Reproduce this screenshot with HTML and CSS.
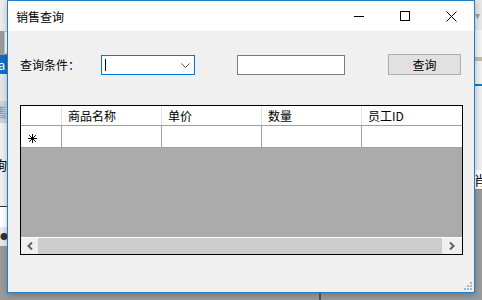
FILE: index.html
```html
<!DOCTYPE html>
<html lang="zh-CN">
  <head>
    <meta charset="UTF-8" />
    <title>销售查询</title>
    <link rel="stylesheet" href="styles.css">
  </head>
  <body>
    <div class="desktop">
      <!-- windows behind -->
      <div class="behind behind-left">
        <div class="bl-top"></div>
        <div class="bl-field"></div>
        <div class="bl-blue">a</div>
        <div class="bl-light"></div>
        <div class="bl-tab">售</div>
        <div class="bl-panel">询</div>
        <div class="bl-white"></div>
        <div class="bl-dot">●</div>
      </div>
      <div class="behind behind-right">
        <div class="br-top">▾</div>
        <div class="br-light"></div>
        <div class="br-tan"></div>
        <div class="br-light2"></div>
        <div class="br-blue"></div>
        <div class="br-panel"></div>
        <div class="br-text">肖</div>
      </div>
      <div class="behind-line"></div>

      <!-- Main window -->
      <div class="window">
        <div class="titlebar">
          <span class="title">销售查询</span>
          <div class="caption-buttons">
            <span class="cap-btn">
              <svg width="10" height="10" viewBox="0 0 10 10"><path d="M0 5.5H10" stroke="#000" stroke-width="1"/></svg>
            </span>
            <span class="cap-btn">
              <svg width="10" height="10" viewBox="0 0 10 10"><rect x="0.5" y="0.5" width="9" height="9" fill="none" stroke="#000" stroke-width="1"/></svg>
            </span>
            <span class="cap-btn">
              <svg width="11" height="11" viewBox="0 0 11 11"><path d="M0.5 0.5L10.5 10.5M10.5 0.5L0.5 10.5" stroke="#000" stroke-width="1"/></svg>
            </span>
          </div>
        </div>

        <div class="client">
          <div class="query-row">
            <label class="query-label">查询条件：</label>
            <div class="combo">
              <span class="caret"></span>
              <svg class="combo-arrow" width="9" height="5" viewBox="0 0 9 5"><path d="M0.5 0.5L4.5 4.5L8.5 0.5" fill="none" stroke="#555" stroke-width="1"/></svg>
            </div>
            <input class="textbox" type="text" />
            <button class="btn">查询</button>
          </div>

          <div class="grid">
            <div class="grid-head">
              <div class="cell rh"></div>
              <div class="cell col">商品名称</div>
              <div class="cell col">单价</div>
              <div class="cell col">数量</div>
              <div class="cell col last">员工ID</div>
            </div>
            <div class="grid-row">
              <div class="cell rh">
                <svg width="9" height="9" viewBox="0 0 9 9"><path d="M4.5 0V9M0 4.5H9M1.2 1.2L7.8 7.8M7.8 1.2L1.2 7.8" stroke="#000" stroke-width="1"/></svg>
              </div>
              <div class="cell col"></div>
              <div class="cell col"></div>
              <div class="cell col"></div>
              <div class="cell col last"></div>
            </div>
            <div class="grid-empty"></div>
            <div class="hscroll">
              <span class="arrow arrow-left">
                <svg width="6" height="8" viewBox="0 0 6 8"><path d="M5 0.5L1.5 4L5 7.5" fill="none" stroke="#606060" stroke-width="2"/></svg>
              </span>
              <span class="thumb"></span>
              <span class="arrow arrow-right">
                <svg width="6" height="8" viewBox="0 0 6 8"><path d="M1 0.5L4.5 4L1 7.5" fill="none" stroke="#606060" stroke-width="2"/></svg>
              </span>
            </div>
          </div>

          <svg class="grip" width="9" height="9" viewBox="0 0 9 9">
            <rect x="6" y="0" width="2" height="2" fill="#b5b5b5"/>
            <rect x="3" y="3" width="2" height="2" fill="#b5b5b5"/>
            <rect x="6" y="3" width="2" height="2" fill="#b5b5b5"/>
            <rect x="0" y="6" width="2" height="2" fill="#b5b5b5"/>
            <rect x="3" y="6" width="2" height="2" fill="#b5b5b5"/>
            <rect x="6" y="6" width="2" height="2" fill="#b5b5b5"/>
          </svg>
        </div>
      </div>
    </div>
  </body>
</html>
```

FILE: styles.css
```css
/* Desktop */
body {
  margin: 0;
  font-family: "Noto Sans CJK SC", "Liberation Sans", sans-serif;
  font-size: 12px;
}
.desktop {
  position: relative;
  width: 482px;
  height: 300px;
  overflow: hidden;
  background: #9a9a9a;
}

/* Windows behind the dialog */
.behind {
  position: absolute;
  top: 0;
  width: 8px;
  overflow: hidden;
  font-size: 13px;
  line-height: 1;
}
.behind-left {
  left: 0;
}
.behind-right {
  right: 0;
  width: 8px;
}
.bl-top {
  height: 31px;
  background: #ececec;
}
.bl-field {
  height: 21px;
  margin-left: 4px;
  background: #fff;
  border: 1px solid #ccc;
  border-right: 0;
}
.bl-blue {
  height: 19px;
  margin-top: 1px;
  background: #0e6fc4;
  color: #fff;
  line-height: 19px;
  text-indent: -2px;
}
.bl-light {
  height: 27px;
  background: #e6e6e6;
}
.bl-tab {
  height: 22px;
  background: #cad3df;
  color: #8a94a3;
  line-height: 22px;
  text-indent: -6px;
}
.bl-panel {
  height: 83px;
  background: #f0f0f0;
  border-bottom: 1px solid #333;
  line-height: 84px;
  text-indent: -6px;
}
.bl-white {
  height: 20px;
  background: #fff;
}
.bl-dot {
  height: 19px;
  background: #e8e8e8;
  color: #333;
  font-size: 8px;
  line-height: 20px;
}
.br-top {
  height: 30px;
  background: #e6e6e6;
  color: #999;
  line-height: 30px;
  font-size: 10px;
  text-indent: 1px;
}
.br-light {
  height: 27px;
  background: #f3f3f3;
}
.br-tan {
  height: 4px;
  background: #c6b8a4;
}
.br-light2 {
  height: 23px;
  background: #f0f0f0;
}
.br-blue {
  height: 2px;
  background: #1079c8;
}
.br-panel {
  height: 84px;
  background: #ededed;
}
.br-text {
  height: 19px;
  background: #fff;
  line-height: 19px;
  border-bottom: 1px solid #888;
}
.behind-line {
  position: absolute;
  left: 319px;
  top: 290px;
  width: 2px;
  height: 10px;
  background: #555;
}

/* Main window */
.window {
  position: relative;
  margin-left: 7px;
  width: 466px;
  height: 291px;
  border: 1px solid #1a7fcf;
  background: #f0f0f0;
  display: flex;
  flex-direction: column;
  box-shadow: 0 2px 6px rgba(0, 0, 0, 0.25);
}
.titlebar {
  height: 30px;
  background: #fff;
  display: flex;
  align-items: center;
}
.title {
  padding-left: 8px;
  color: #000;
}
.caption-buttons {
  margin-left: auto;
  display: flex;
}
.cap-btn {
  width: 46px;
  height: 30px;
  display: flex;
  align-items: center;
  justify-content: center;
}

.client {
  flex: 1;
  position: relative;
  padding: 23px 0 0 12px;
}
.query-row {
  display: flex;
  align-items: flex-start;
  height: 21px;
}
.query-label {
  width: 81px;
  line-height: 21px;
  color: #000;
}
.combo {
  box-sizing: border-box;
  width: 94px;
  height: 20px;
  margin-top: 1px;
  border: 1px solid #0078d7;
  background: #fff;
  display: flex;
  align-items: center;
  padding-left: 3px;
}
.caret {
  width: 1px;
  height: 12px;
  background: #000;
}
.combo-arrow {
  margin-left: auto;
  margin-right: 4px;
  margin-top: 1px;
}
.textbox {
  box-sizing: border-box;
  width: 108px;
  height: 20px;
  margin: 1px 0 0 42px;
  padding: 0;
  border: 1px solid #7a7a7a;
  background: #fff;
}
.btn {
  box-sizing: border-box;
  width: 73px;
  height: 21px;
  margin-left: 43px;
  padding: 0;
  border: 1px solid #adadad;
  background: #e1e1e1;
  font: inherit;
  color: #000;
}

/* Data grid */
.grid {
  box-sizing: border-box;
  width: 443px;
  height: 150px;
  margin-top: 30px;
  border: 1px solid #000;
  background: #ababab;
  display: flex;
  flex-direction: column;
}
.grid-head,
.grid-row {
  display: flex;
  background: #fff;
  border-bottom: 1px solid #a0a0a0;
}
.grid-head {
  height: 19px;
}
.grid-row {
  height: 21px;
}
.cell {
  box-sizing: border-box;
  border-right: 1px solid #a0a0a0;
  display: flex;
  align-items: center;
}
.grid-head .cell {
  border-right-color: #e3e3e3;
  padding-left: 6px;
  color: #000;
}
.rh {
  width: 41px;
}
.grid-row .rh {
  padding-left: 7px;
  padding-top: 3px;
}
.col {
  width: 100px;
}
.col.last {
  flex: 1;
  border-right: 0;
}
.grid-empty {
  flex: 1;
}
.hscroll {
  height: 16px;
  border-top: 1px solid #fff;
  background: #f0f0f0;
  display: flex;
}
.arrow {
  display: flex;
  align-items: center;
  justify-content: center;
}
.arrow-left {
  width: 17px;
}
.arrow-right {
  width: 20px;
}
.thumb {
  flex: 1;
  background: #cdcdcd;
}
.grip {
  position: absolute;
  right: 1px;
  bottom: 1px;
}
```
